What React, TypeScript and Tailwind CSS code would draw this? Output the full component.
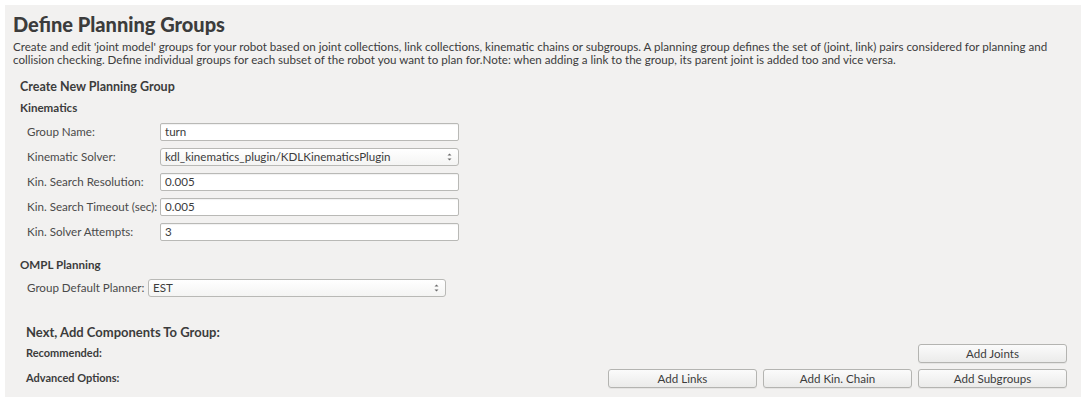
import React from "react";

const font = { fontFamily: "Lato, 'Noto Sans', 'Liberation Sans', sans-serif" };

function Spin() {
  return (
    <svg width="7" height="10" viewBox="0 0 7 10" className="shrink-0">
      <path d="M1.5 3.5 L3.5 1.5 L5.5 3.5 Z" fill="#6a6a6a" />
      <path d="M1.5 6.5 L3.5 8.5 L5.5 6.5 Z" fill="#6a6a6a" />
    </svg>
  );
}

function TextBox({ value, w }: { value: string; w: string }) {
  return (
    <div
      className={`${w} h-[18px] bg-white border border-[#b9b9b6] rounded-[2px] flex items-center px-[4px] text-[11.6px] text-[#3c3c3c] shadow-[inset_0_1px_1px_rgba(0,0,0,0.06)]`}
    >
      {value}
    </div>
  );
}

function Combo({ value, w }: { value: string; w: string }) {
  return (
    <div
      className={`${w} h-[18px] bg-gradient-to-b from-white to-[#f4f4f3] border border-[#b9b9b6] rounded-[3px] flex items-center justify-between pl-[4px] pr-[5px] text-[11.6px] text-[#3c3c3c]`}
    >
      <span>{value}</span>
      <Spin />
    </div>
  );
}

function Btn({ label }: { label: string }) {
  return (
    <div className="w-[149px] h-[19px] rounded-[3px] border border-[#b4b4b1] bg-gradient-to-b from-[#fbfbfb] to-[#ebebea] flex items-center justify-center text-[11.6px] text-[#3c3c3c] shadow-[0_1px_0_rgba(0,0,0,0.05)]">
      {label}
    </div>
  );
}

function Row({ label, children }: { label: string; children: React.ReactNode }) {
  return (
    <div className="flex items-center h-[18px]">
      <div className="w-[133px] text-[11.6px] text-[#4a4a4a]">{label}</div>
      {children}
    </div>
  );
}

export default function App() {
  return (
    <div className="bg-white w-[1086px] h-[400px] pt-[5px] pl-[5px] pr-[5px]" style={font}>
      <div className="bg-[#f2f1f0] h-[392px] pl-[8px] pt-[7px] text-[#3c3c3c]">
        <h1 className="text-[20px] font-black leading-[24px] text-[#3c3c3c]">Define Planning Groups</h1>
        <p className="mt-[4px] text-[11.6px] leading-[13px] pr-[14px]">
          Create and edit 'joint model' groups for your robot based on joint collections, link collections, kinematic chains or subgroups. A planning group defines the set of (joint, link) pairs considered for planning and collision checking. Define individual groups for each subset of the robot you want to plan for.Note: when adding a link to the group, its parent joint is added too and vice versa.
        </p>
        <div className="pl-[7px] mt-[14px]">
          <div className="text-[12.5px] font-bold leading-[14px]">Create New Planning Group</div>
          <div className="text-[11.6px] font-bold leading-[13px] mt-[7px]">Kinematics</div>
          <div className="pl-[7px] mt-[9px] flex flex-col gap-[7px]">
            <Row label="Group Name:">
              <TextBox value="turn" w="w-[299px]" />
            </Row>
            <Row label="Kinematic Solver:">
              <Combo value="kdl_kinematics_plugin/KDLKinematicsPlugin" w="w-[299px]" />
            </Row>
            <Row label="Kin. Search Resolution:">
              <TextBox value="0.005" w="w-[299px]" />
            </Row>
            <Row label="Kin. Search Timeout (sec):">
              <TextBox value="0.005" w="w-[299px]" />
            </Row>
            <Row label="Kin. Solver Attempts:">
              <TextBox value="3" w="w-[299px]" />
            </Row>
          </div>
          <div className="text-[11.6px] font-bold leading-[13px] mt-[17px]">OMPL Planning</div>
          <div className="pl-[7px] mt-[8px] flex items-center h-[18px]">
            <div className="w-[121px] text-[11.6px] text-[#4a4a4a]">Group Default Planner:</div>
            <Combo value="EST" w="w-[298px]" />
          </div>
        </div>
        <div className="pl-[13px] pr-[14px] mt-[27px]">
          <div className="text-[13px] font-bold leading-[16px]">Next, Add Components To Group:</div>
          <div className="mt-[4px] flex flex-col gap-[6px]">
            <div className="flex items-center justify-between h-[19px]">
              <div className="text-[11px] font-bold">Recommended:</div>
              <Btn label="Add Joints" />
            </div>
            <div className="flex items-center justify-between h-[19px]">
              <div className="text-[11px] font-bold">Advanced Options:</div>
              <div className="flex gap-[6px]">
                <Btn label="Add Links" />
                <Btn label="Add Kin. Chain" />
                <Btn label="Add Subgroups" />
              </div>
            </div>
          </div>
        </div>
      </div>
    </div>
  );
}
